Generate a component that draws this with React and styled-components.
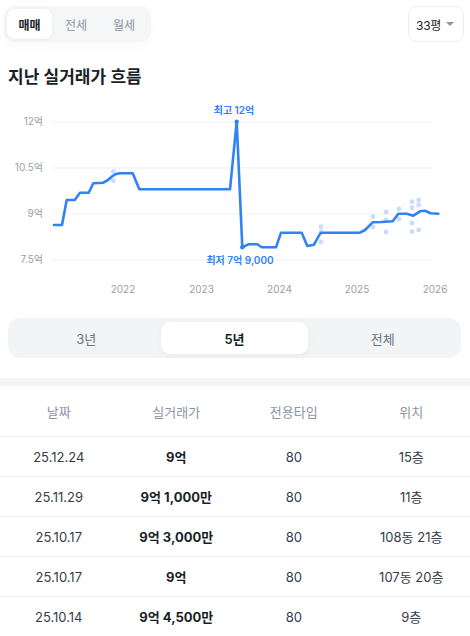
import React, { useState } from "react";
import styled, { createGlobalStyle } from "styled-components";

const GlobalStyle = createGlobalStyle`
  body {
    margin: 0;
    background: #ffffff;
    font-family: Inter, "Noto Sans CJK KR", sans-serif;
    color: #191f28;
  }
`;

const Page = styled.div`
  width: 470px;
  overflow: hidden;
`;

const TopBar = styled.div`
  display: flex;
  justify-content: space-between;
  align-items: flex-start;
  padding: 6px 6px 0 4px;
`;

const TabGroup = styled.div`
  display: flex;
  padding: 3px;
  background: #f5f6f8;
  border-radius: 10px;
  box-shadow: 0 6px 14px rgba(0, 0, 0, 0.02);
`;

const Tab = styled.button`
  border: 0;
  background: ${(p) => (p.$active ? "#ffffff" : "transparent")};
  color: ${(p) => (p.$active ? "#191f28" : "#8b95a1")};
  font-family: inherit;
  font-size: 12px;
  font-weight: ${(p) => (p.$active ? 600 : 400)};
  width: ${(p) => (p.$active ? "45px" : "48px")};
  height: 30px;
  border-radius: 8px;
  padding: 0;
  box-shadow: ${(p) => (p.$active ? "0 1px 4px rgba(0,0,0,0.06)" : "none")};
`;

const AreaButton = styled.button`
  display: flex;
  align-items: center;
  gap: 5px;
  height: 36px;
  padding: 0 9px 0 7px;
  border: 1px solid #eceef0;
  border-radius: 8px;
  background: #fff;
  font-family: inherit;
  font-size: 12px;
  letter-spacing: -0.3px;
  color: #191f28;
`;

const Caret = styled.span`
  width: 0;
  height: 0;
  border-left: 4px solid transparent;
  border-right: 4px solid transparent;
  border-top: 4px solid #8b95a1;
`;

const Title = styled.h2`
  margin: 23px 0 0 8px;
  font-size: 17px;
  line-height: 24px;
  font-weight: 600;
  color: #191f28;
`;

const ChartSvg = styled.svg`
  display: block;
  width: 470px;
  height: 200px;
  margin-top: 11px;
`;

const Segmented = styled.div`
  display: grid;
  grid-template-columns: repeat(3, 1fr);
  margin: 18px 9px 0 8px;
  padding: 4px;
  height: 40px;
  box-sizing: border-box;
  background: #f2f4f6;
  border-radius: 12px;
`;

const Segment = styled.button`
  border: 0;
  border-radius: 9px;
  margin: 0 1px;
  background: ${(p) => (p.$active ? "#ffffff" : "transparent")};
  color: ${(p) => (p.$active ? "#191f28" : "#6b7684")};
  font-family: inherit;
  font-size: 13px;
  font-weight: ${(p) => (p.$active ? 600 : 400)};
  box-shadow: ${(p) => (p.$active ? "0 2px 10px rgba(0,0,0,0.05)" : "none")};
`;

const Band = styled.div`
  height: 8px;
  background: #f2f4f6;
  margin-top: 20px;
`;

const Table = styled.table`
  width: 470px;
  border-collapse: collapse;
  table-layout: fixed;
`;

const Th = styled.th`
  height: 50px;
  font-size: 13px;
  font-weight: 400;
  color: #8b95a1;
  text-align: center;
  border-bottom: 1px solid #eceef0;
  padding: 0;
`;

const Td = styled.td`
  height: 39px;
  padding: 0;
  text-align: center;
  font-size: 13px;
  color: ${(p) => (p.$strong ? "#191f28" : "#333d4b")};
  font-weight: ${(p) => (p.$strong ? 700 : 400)};
  border-bottom: 1px solid #eceef0;
`;

const chartFont = "Inter, 'Noto Sans CJK KR', sans-serif";

const line = [
  [54, 225], [62, 225], [66.7, 200], [74.7, 200], [80, 192.7], [88.7, 192.7],
  [93.3, 183.3], [103.3, 182.7], [108, 180], [111.7, 176.7], [116, 174], [120, 173.3],
  [132.7, 173.3], [139.3, 189.3], [230, 189.3], [236.7, 121.7], [242.3, 247.3],
  [248.3, 244.3], [257.3, 244.3], [261.7, 247.3], [276, 247.3], [281, 232.7],
  [301.7, 232.7], [307.3, 246], [314, 244.7], [319.3, 235], [321, 232.7], [360, 232.7],
  [365, 230], [372.7, 222.3], [381.7, 222], [392.7, 221.3], [398.3, 213.7], [406.7, 213.7],
  [413.3, 215.7], [420, 211.3], [425, 210.7], [430.7, 213.3], [438.3, 213.7],
];

const dots = [
  [113.3, 171.7], [113.3, 180.7],
  [321, 226.7], [321, 231.7], [321, 242],
  [373, 216.7], [373, 227],
  [386, 212], [386, 220], [386, 232],
  [399, 209], [399, 219],
  [412, 201.7], [412, 207.7], [412, 223], [412, 231.7],
  [418.7, 200], [418.7, 205], [418.7, 230],
];

const yTicks = [
  { label: "12억", y: 122 },
  { label: "10.5억", y: 168 },
  { label: "9억", y: 214 },
  { label: "7.5억", y: 260 },
];

const years = [
  { label: "2022", x: 123 },
  { label: "2023", x: 201.5 },
  { label: "2024", x: 279.5 },
  { label: "2025", x: 357 },
  { label: "2026", x: 435 },
];

const rows = [
  ["25.12.24", "9억", "80", "15층"],
  ["25.11.29", "9억 1,000만", "80", "11층"],
  ["25.10.17", "9억 3,000만", "80", "108동 21층"],
  ["25.10.17", "9억", "80", "107동 20층"],
  ["25.10.14", "9억 4,500만", "80", "9층"],
];

function PriceChart() {
  const oy = 100;
  const pts = line.map(([x, y]) => `${x},${y - oy}`).join(" ");
  return (
    <ChartSvg viewBox="0 0 470 200">
      {yTicks.map((t) => (
        <g key={t.label}>
          <line x1="52" x2="433" y1={t.y - oy} y2={t.y - oy} stroke="#f0f1f3" strokeWidth="1" />
          <text x="43" y={t.y - oy + 3} textAnchor="end" fontSize="10" fill="#9aa0a6"
            fontFamily={chartFont}>{t.label}</text>
        </g>
      ))}
      {years.map((y) => (
        <text key={y.label} x={y.x} y={293 - oy} textAnchor="middle" fontSize="10" fill="#9aa0a6"
          fontFamily={chartFont}>{y.label}</text>
      ))}
      {dots.map(([x, y], i) => (
        <circle key={i} cx={x} cy={y - oy} r="2.4" fill="#c9dcfb" />
      ))}
      <polyline points={pts} fill="none" stroke="#3182f6" strokeWidth="2.6"
        strokeLinejoin="round" strokeLinecap="round" />
      <circle cx="236.7" cy={121.7 - oy} r="2.2" fill="#3182f6" />
      <circle cx="242.3" cy={247.3 - oy} r="2.2" fill="#3182f6" />
      <text x="234" y={113.5 - oy} textAnchor="middle" fontSize="10" fontWeight="600" fill="#3182f6"
        fontFamily={chartFont}>최고 12억</text>
      <text x="240" y={263.5 - oy} textAnchor="middle" fontSize="10" fontWeight="600" fill="#3182f6"
        fontFamily={chartFont}>최저 7억 9,000</text>
    </ChartSvg>
  );
}

export default function App() {
  const [deal, setDeal] = useState("매매");
  const [range, setRange] = useState("5년");

  return (
    <Page>
      <GlobalStyle />
      <TopBar>
        <TabGroup>
          {["매매", "전세", "월세"].map((t) => (
            <Tab key={t} $active={deal === t} onClick={() => setDeal(t)}>{t}</Tab>
          ))}
        </TabGroup>
        <AreaButton>
          33평 <Caret />
        </AreaButton>
      </TopBar>
      <Title>지난 실거래가 흐름</Title>
      <PriceChart />
      <Segmented>
        {["3년", "5년", "전체"].map((r) => (
          <Segment key={r} $active={range === r} onClick={() => setRange(r)}>{r}</Segment>
        ))}
      </Segmented>
      <Band />
      <Table>
        <thead>
          <tr>
            <Th>날짜</Th>
            <Th>실거래가</Th>
            <Th>전용타입</Th>
            <Th>위치</Th>
          </tr>
        </thead>
        <tbody>
          {rows.map((r, i) => (
            <tr key={i}>
              <Td>{r[0]}</Td>
              <Td $strong>{r[1]}</Td>
              <Td>{r[2]}</Td>
              <Td>{r[3]}</Td>
            </tr>
          ))}
        </tbody>
      </Table>
    </Page>
  );
}
